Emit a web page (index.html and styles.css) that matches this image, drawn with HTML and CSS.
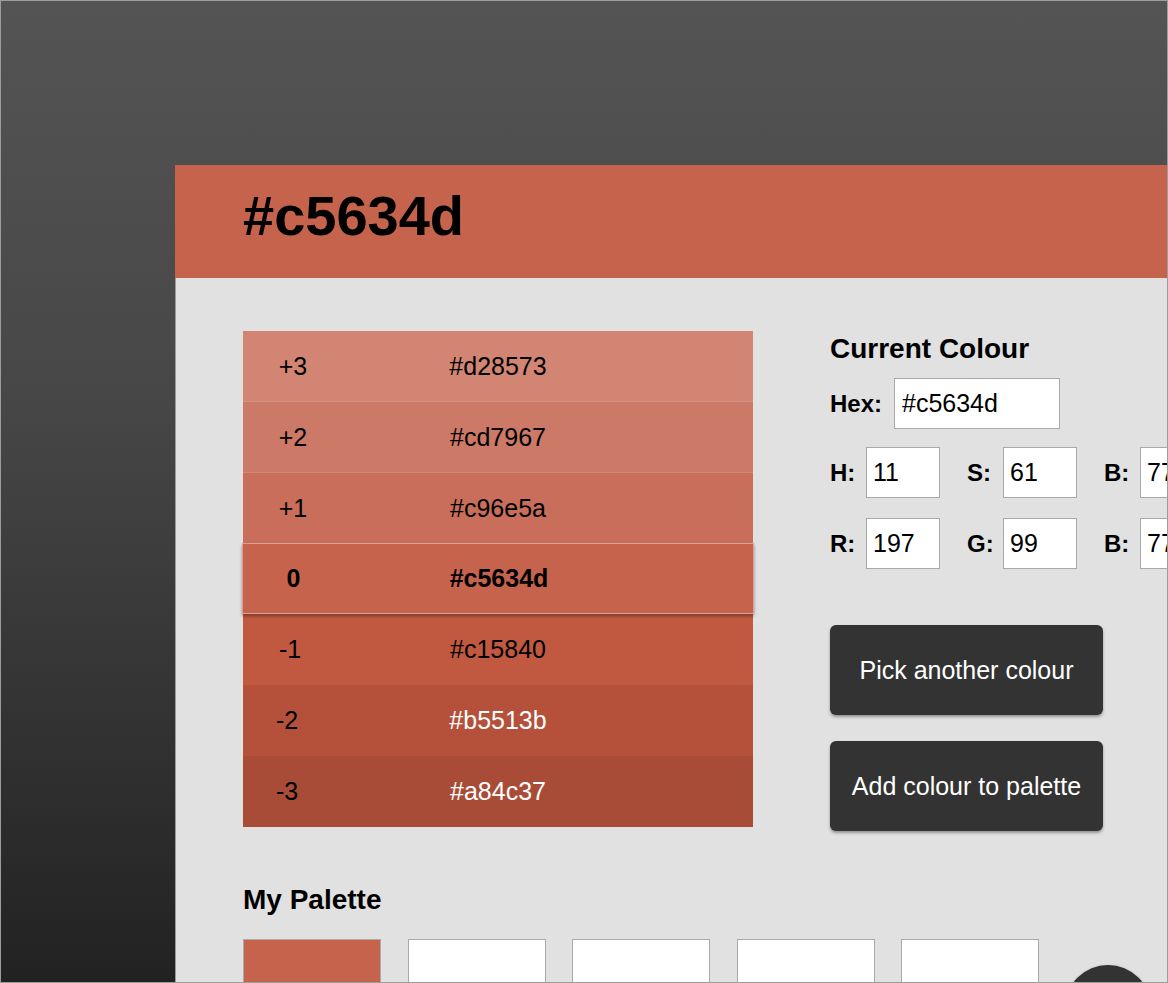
FILE: index.html
```html
<!DOCTYPE html>
<html lang="en">
<head>
<meta charset="utf-8">
<title>#c5634d</title>
<link rel="stylesheet" href="styles.css">
</head>
<body>
<div class="frame">
  <div class="panel">
    <header class="panel-header">
      <h1 class="title">#c5634d</h1>
    </header>
    <main class="panel-body">
      <div class="top">
        <div class="shades">
          <div class="shade shade-light" style="background:#d28573"><span class="step">+3</span><span class="hex">#d28573</span></div>
          <div class="shade shade-light" style="background:#cd7967"><span class="step">+2</span><span class="hex">#cd7967</span></div>
          <div class="shade shade-light" style="background:#c96e5a"><span class="step">+1</span><span class="hex">#c96e5a</span></div>
          <div class="shade shade-current" style="background:#c5634d"><span class="step">0</span><span class="hex">#c5634d</span></div>
          <div class="shade" style="background:#c15840"><span class="step">-1</span><span class="hex">#c15840</span></div>
          <div class="shade shade-dark" style="background:#b5513b"><span class="step">-2</span><span class="hex">#b5513b</span></div>
          <div class="shade shade-dark" style="background:#a84c37"><span class="step">-3</span><span class="hex">#a84c37</span></div>
        </div>
        <aside class="current">
          <h2 class="section-title">Current Colour</h2>
          <div class="hex-row">
            <label class="hex-label">Hex:</label>
            <input class="input hex-input" type="text" value="#c5634d">
          </div>
          <div class="field-row row-hsb">
            <div class="field"><label class="field-label">H:</label><input class="input small-input" type="text" value="11"></div>
            <div class="field"><label class="field-label">S:</label><input class="input small-input" type="text" value="61"></div>
            <div class="field"><label class="field-label">B:</label><input class="input small-input" type="text" value="77"></div>
          </div>
          <div class="field-row row-rgb">
            <div class="field"><label class="field-label">R:</label><input class="input small-input" type="text" value="197"></div>
            <div class="field"><label class="field-label">G:</label><input class="input small-input" type="text" value="99"></div>
            <div class="field"><label class="field-label">B:</label><input class="input small-input" type="text" value="77"></div>
          </div>
          <div class="buttons">
            <button class="btn" type="button">Pick another colour</button>
            <button class="btn" type="button">Add colour to palette</button>
          </div>
        </aside>
      </div>
      <section class="palette">
        <h2 class="section-title">My Palette</h2>
        <div class="swatches">
          <div class="swatch" style="background:#c5634d"></div>
          <div class="swatch"></div>
          <div class="swatch"></div>
          <div class="swatch"></div>
          <div class="swatch"></div>
        </div>
      </section>
    </main>
  </div>
  <button class="fab" type="button" aria-label="Menu"></button>
</div>
</body>
</html>
```

FILE: styles.css
```css
* { box-sizing: border-box; }

html, body {
  margin: 0;
  padding: 0;
}

body {
  font-family: "Liberation Sans", Arial, Helvetica, sans-serif;
  color: #000;
}

.frame {
  position: relative;
  width: 1168px;
  height: 983px;
  overflow: hidden;
  border: 1px solid #9c9c9c;
  background: linear-gradient(to bottom, #545454 0%, #474747 40%, #222222 100%);
}

.panel {
  margin-top: 164px;
  margin-left: 174px;
  width: 1120px;
  height: 900px;
  display: flex;
  flex-direction: column;
}

.panel-header {
  height: 113px;
  flex-shrink: 0;
  background: #c5634d;
  padding: 19px 0 0 68px;
}

.title {
  margin: 0;
  font-size: 56px;
  line-height: 64px;
  font-weight: bold;
  color: #000;
}

.panel-body {
  flex: 1;
  background: #e1e1e1;
  border-left: 1px solid #9a9a9a;
  padding: 53px 0 0 67px;
}

.top {
  display: flex;
  flex-wrap: nowrap;
  align-items: flex-start;
}

/* shades table */
.shades {
  width: 510px;
  flex-shrink: 0;
  display: flex;
  flex-direction: column;
}

.shade {
  height: 71px;
  display: grid;
  grid-template-columns: 100px 310px 100px;
  align-items: center;
  font-size: 25px;
  color: #000;
}

.shade:first-child { height: 70px; }

.shade-light + .shade-light {
  border-top: 1px solid rgba(255, 255, 255, 0.18);
}

.step, .hex {
  text-align: center;
}

.shade-current {
  position: relative;
  z-index: 1;
  margin: 0 -1px;
  border: 1px solid rgba(255, 255, 255, 0.4);
  box-shadow: 0 2px 3px rgba(0, 0, 0, 0.35);
  font-weight: bold;
  grid-template-columns: 101px 310px 101px;
}

.shade-dark .hex { color: #fff; }
.shade-dark .step { padding-right: 12px; }
.shade:nth-child(5) .step { padding-right: 6px; }

/* current colour column */
.current {
  flex-shrink: 0;
  margin-left: 77px;
  width: 420px;
}

.section-title {
  margin: 0;
  font-size: 28px;
  line-height: 32px;
  font-weight: bold;
}

.current .section-title { padding-top: 2px; }

.hex-row {
  display: flex;
  align-items: center;
  margin-top: 13px;
}

.hex-label,
.field-label {
  font-size: 24px;
  font-weight: bold;
  flex-shrink: 0;
}

.hex-label { width: 64px; }
.field-label { width: 36px; }

.input {
  height: 51px;
  border: 1px solid #a8a8a8;
  background: #fff;
  font-family: "Liberation Sans", Arial, Helvetica, sans-serif;
  font-size: 25px;
  color: #000;
  padding: 0 6px;
  margin: 0;
  border-radius: 0;
  outline: none;
}

.hex-input { width: 166px; padding-left: 7px; }
.small-input { width: 74px; flex-shrink: 0; }

.field-row {
  display: flex;
  gap: 27px;
}

.row-hsb { margin-top: 18px; }
.row-rgb { margin-top: 20px; }

.field {
  display: flex;
  align-items: center;
  flex-shrink: 0;
}

.buttons {
  display: flex;
  flex-direction: column;
  align-items: flex-start;
  gap: 26px;
  margin-top: 56px;
}

.btn {
  width: 273px;
  height: 90px;
  border: none;
  border-radius: 6px;
  background: #333333;
  color: #fff;
  font-family: "Liberation Sans", Arial, Helvetica, sans-serif;
  font-size: 25px;
  padding: 0;
  box-shadow: 0 2px 3px rgba(0, 0, 0, 0.35);
  cursor: pointer;
}

/* palette */
.palette {
  margin-top: 53px;
}

.swatches {
  display: flex;
  gap: 26.5px;
  margin-top: 23px;
}

.swatch {
  width: 138px;
  height: 138px;
  border: 1px solid #a9a9a9;
  background: #fff;
  flex-shrink: 0;
}

/* floating action button */
.fab {
  position: absolute;
  left: 1064px;
  top: 964px;
  width: 86px;
  height: 86px;
  border-radius: 50%;
  border: none;
  background: #333333;
  box-shadow: 0 1px 3px rgba(0, 0, 0, 0.3);
  padding: 0;
}
```
